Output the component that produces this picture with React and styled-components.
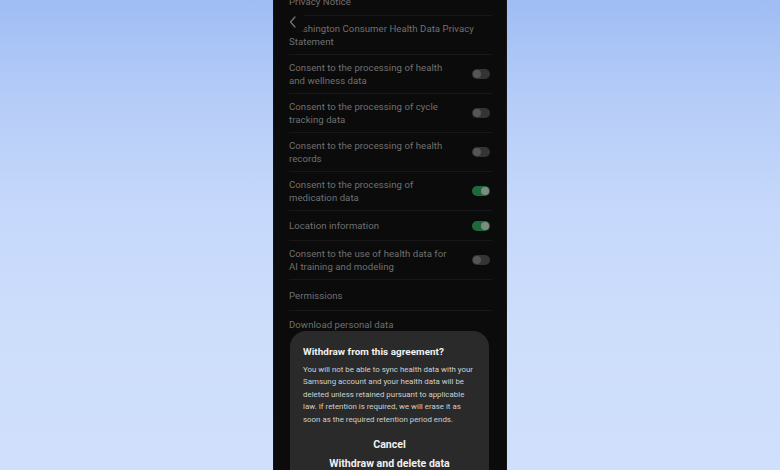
import React from "react";
import styled, { createGlobalStyle } from "styled-components";

const Global = createGlobalStyle`
  html, body { margin: 0; padding: 0; }
  body {
    width: 780px;
    height: 470px;
    overflow: hidden;
    font-family: Roboto, "Noto Sans", "Liberation Sans", sans-serif;
  }
`;

const Stage = styled.div`
  width: 780px;
  height: 470px;
  display: flex;
  justify-content: center;
  box-sizing: border-box;
  background: linear-gradient(
    180deg,
    #9fbdf4 0%,
    #b6cdf8 22%,
    #c6d8fb 45%,
    #cddefb 70%,
    #d0e0fb 100%
  );
`;

const Phone = styled.div`
  position: relative;
  width: 234px;
  height: 470px;
  background: #0b0b0b;
  overflow: hidden;
  border-left: 1px solid #151515;
  border-right: 1px solid #151515;
  box-sizing: border-box;
`;

const List = styled.div`
  display: flex;
  flex-direction: column;
  margin-top: -13px;
  padding: 0 14px 0 15px;
`;

const Row = styled.div`
  display: flex;
  align-items: center;
  justify-content: space-between;
  height: ${(p) => p.$h}px;
  border-top: ${(p) => (p.$first ? "none" : "1px solid #181818")};
  box-sizing: border-box;
`;

const Label = styled.div`
  color: #707070;
  font-size: 9.6px;
  line-height: 13px;
  letter-spacing: 0.05px;
  white-space: nowrap;
`;

const Toggle = styled.div`
  position: relative;
  width: 18px;
  height: 10px;
  border-radius: 5px;
  margin-right: 2px;
  flex: none;
  background: ${(p) => (p.$on ? "#1c6a3c" : "#343434")};
  &::after {
    content: "";
    position: absolute;
    top: 1px;
    ${(p) => (p.$on ? "right: 1px;" : "left: 1px;")}
    width: 8px;
    height: 8px;
    border-radius: 50%;
    background: ${(p) => (p.$on ? "#7f8a83" : "#555555")};
  }
`;

const BackButton = styled.div`
  position: absolute;
  left: 6px;
  top: 9px;
  width: 26px;
  height: 26px;
  border-radius: 50%;
  background: #0b0b0b;
  display: flex;
  align-items: center;
  justify-content: center;
`;

const Sheet = styled.div`
  position: absolute;
  left: 16px;
  right: 17px;
  top: 331px;
  height: 170px;
  border-radius: 16px;
  background: #2a2a2a;
  padding: 14px 13px 0 13px;
  box-sizing: border-box;
  display: flex;
  flex-direction: column;
`;

const Title = styled.div`
  color: #f2f2f2;
  font-size: 9.9px;
  font-weight: 700;
  line-height: 14px;
  letter-spacing: 0.05px;
`;

const Body = styled.div`
  margin-top: 5px;
  color: #cfcfcf;
  font-size: 7.9px;
  line-height: 12.4px;
  white-space: nowrap;
`;

const Actions = styled.div`
  margin-top: 9px;
  display: flex;
  flex-direction: column;
  align-items: center;
`;

const Action = styled.div`
  color: #f0f0f0;
  font-size: 10.6px;
  font-weight: 700;
  line-height: 19px;
`;

const rows = [
  { lines: ["Privacy Notice"], h: 28 },
  { lines: ["Washington Consumer Health Data Privacy", "Statement"], h: 39 },
  { lines: ["Consent to the processing of health", "and wellness data"], h: 39, toggle: "off" },
  { lines: ["Consent to the processing of cycle", "tracking data"], h: 39, toggle: "off" },
  { lines: ["Consent to the processing of health", "records"], h: 39, toggle: "off" },
  { lines: ["Consent to the processing of", "medication data"], h: 39, toggle: "on" },
  { lines: ["Location information"], h: 30, toggle: "on" },
  { lines: ["Consent to the use of health data for", "AI training and modeling"], h: 39, toggle: "off" },
  { lines: ["Permissions"], h: 31 },
  { lines: ["Download personal data"], h: 28 },
];

const bodyLines = [
  "You will not be able to sync health data with your",
  "Samsung account and your health data will be",
  "deleted unless retained pursuant to applicable",
  "law. If retention is required, we will erase it as",
  "soon as the required retention period ends.",
];

export default function App() {
  return (
    <>
      <Global />
      <Stage>
        <Phone>
          <List>
            {rows.map((r, i) => (
              <Row key={i} $h={r.h} $first={i === 0}>
                <Label>
                  {r.lines.map((l, j) => (
                    <div key={j}>{l}</div>
                  ))}
                </Label>
                {r.toggle && <Toggle $on={r.toggle === "on"} />}
              </Row>
            ))}
          </List>
          <BackButton>
            <svg width="8" height="12" viewBox="0 0 8 12" fill="none">
              <path d="M6 1 L1.5 6 L6 11" stroke="#777" strokeWidth="1.2" strokeLinecap="round" strokeLinejoin="round" />
            </svg>
          </BackButton>
          <Sheet>
            <Title>Withdraw from this agreement?</Title>
            <Body>
              {bodyLines.map((l, i) => (
                <div key={i}>{l}</div>
              ))}
            </Body>
            <Actions>
              <Action>Cancel</Action>
              <Action>Withdraw and delete data</Action>
            </Actions>
          </Sheet>
        </Phone>
      </Stage>
    </>
  );
}
